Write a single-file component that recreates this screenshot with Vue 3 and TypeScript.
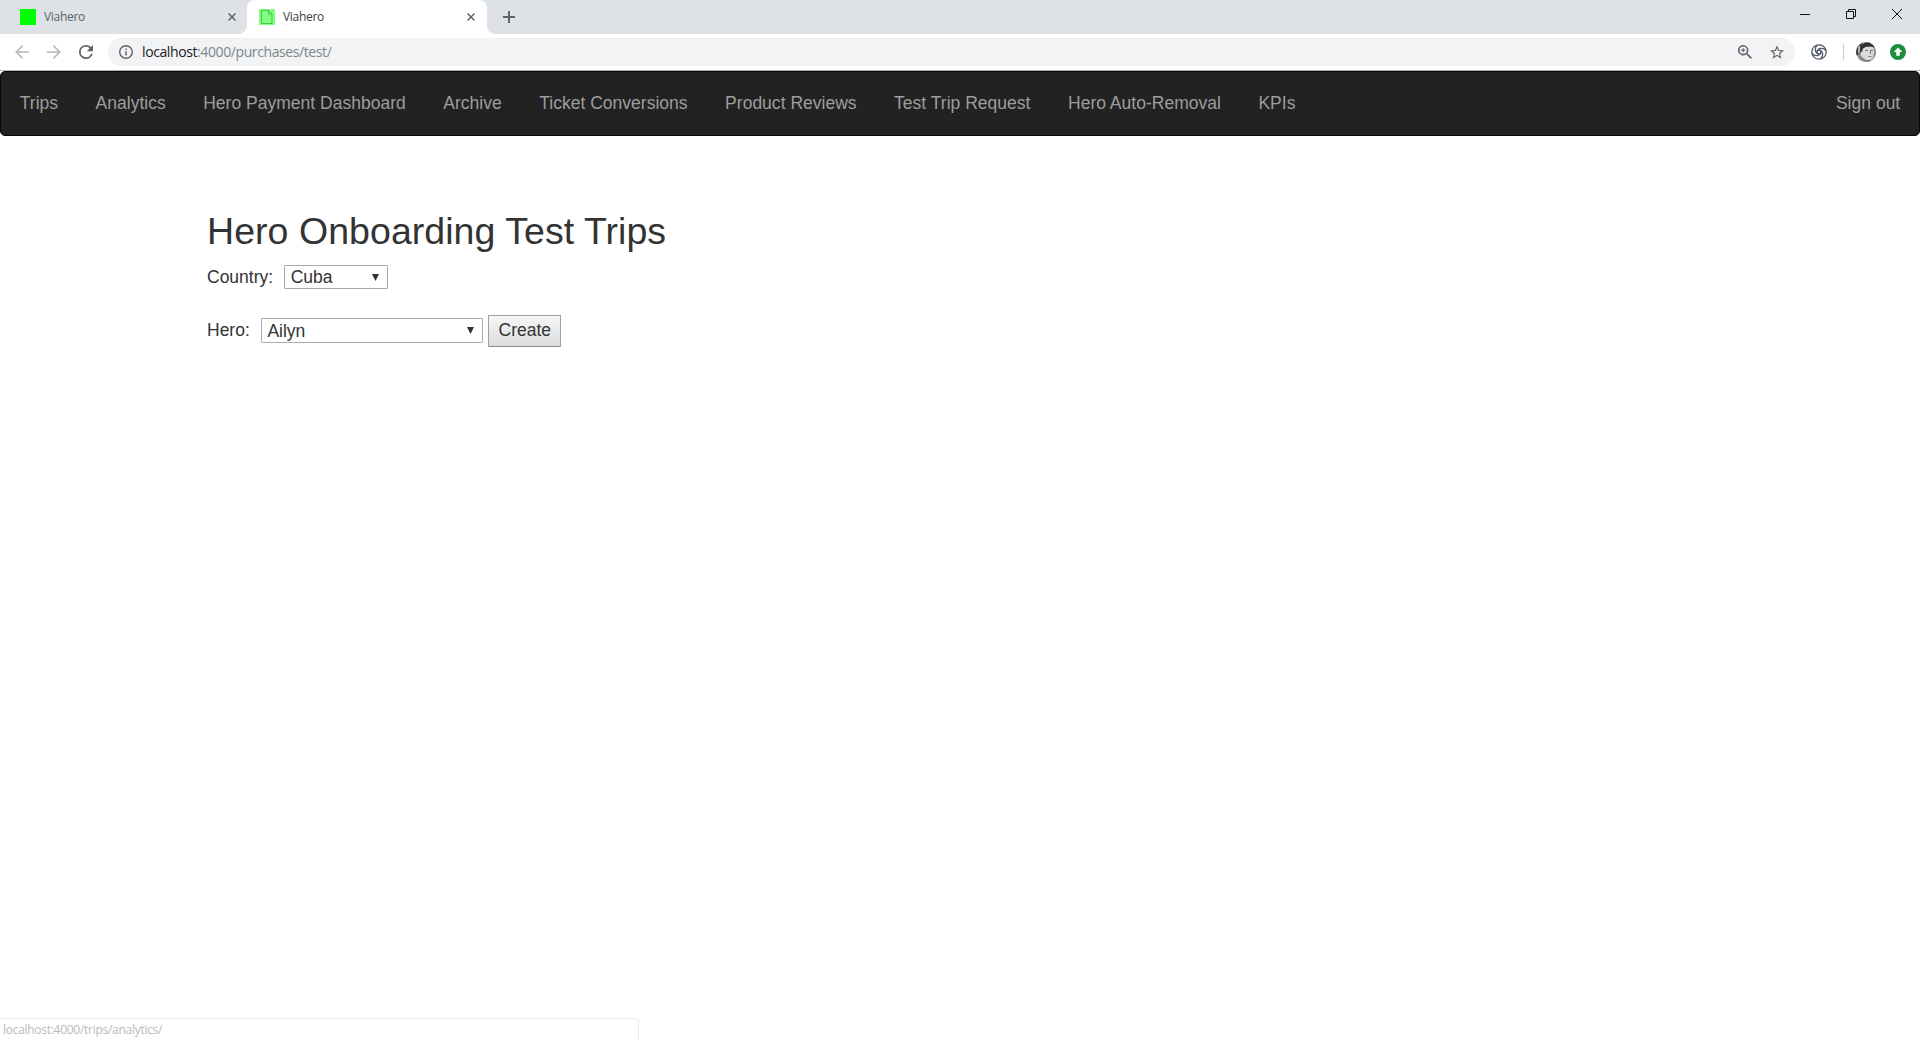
<script setup lang="ts">
import { ref } from 'vue'

interface NavLink {
  label: string
  href: string
}

const links: NavLink[] = [
  { label: 'Trips', href: '#trips' },
  { label: 'Analytics', href: '#analytics' },
  { label: 'Hero Payment Dashboard', href: '#payments' },
  { label: 'Archive', href: '#archive' },
  { label: 'Ticket Conversions', href: '#tickets' },
  { label: 'Product Reviews', href: '#reviews' },
  { label: 'Test Trip Request', href: '#test' },
  { label: 'Hero Auto-Removal', href: '#removal' },
  { label: 'KPIs', href: '#kpis' },
]

const country = ref<string>('Cuba')
const hero = ref<string>('Ailyn')
const blades: number[] = [20, 110, 200, 290]
</script>

<template>
  <div class="window">
    <header class="tabstrip">
      <div class="tab">
        <span class="favicon"></span>
        <span class="tab-title">Viahero</span>
        <svg class="tab-close" viewBox="0 0 8 8"><path d="M.5.5l7 7M7.5.5l-7 7" /></svg>
      </div>
      <div class="tab active">
        <svg class="favicon page" viewBox="0 0 16 16">
          <path d="M2.5 1.5h7l3.5 3.5v9.5H2.5zM9.5 1.5V5H13" fill="none" stroke="#45c545" />
        </svg>
        <span class="tab-title">Viahero</span>
        <svg class="tab-close" viewBox="0 0 8 8"><path d="M.5.5l7 7M7.5.5l-7 7" /></svg>
      </div>
      <svg class="new-tab" viewBox="0 0 12 12"><path d="M6 0v12M0 6h12" /></svg>
      <div class="window-buttons">
        <svg viewBox="0 0 10 10"><path d="M0 5.5h10" /></svg>
        <svg viewBox="0 0 10 10"><path d="M.5 2.5h7v7h-7zM2.5 2.5v-2h7v7h-2" /></svg>
        <svg viewBox="0 0 10 10"><path d="M0 0l10 10M10 0L0 10" /></svg>
      </div>
    </header>

    <div class="toolbar">
      <svg class="back" viewBox="4 4 16 16"><path d="M20 11H7.83l5.59-5.59L12 4l-8 8 8 8 1.41-1.41L7.83 13H20z" /></svg>
      <svg class="forward" viewBox="4 4 16 16"><path d="M12 4l-1.41 1.41L16.17 11H4v2h12.17l-5.58 5.59L12 20l8-8z" /></svg>
      <svg class="reload" viewBox="4 4 16 16">
        <path d="M17.65 6.35A7.96 7.96 0 0 0 12 4a8 8 0 1 0 7.73 10h-2.08A6 6 0 1 1 12 6c1.66 0 3.14.69 4.22 1.78L13 11h7V4z" />
      </svg>
      <div class="omnibox">
        <svg class="info" viewBox="2 2 20 20">
          <path d="M11 17h2v-6h-2zm1-15a10 10 0 1 0 0 20 10 10 0 0 0 0-20zm0 18a8 8 0 1 1 0-16 8 8 0 0 1 0 16zM11 9h2V7h-2z" />
        </svg>
        <span class="url"><b>localhost</b>:4000/purchases/test/</span>
        <svg class="magnifier" viewBox="3 3 17.5 17.5">
          <path d="M15.5 14h-.79l-.28-.27A6.5 6.5 0 1 0 13.73 14.43l.27.28v.79l5 4.99L20.49 19zm-6 0a4.5 4.5 0 1 1 0-9 4.5 4.5 0 0 1 0 9zM10.25 7h-1.5v1.75H7v1.5h1.75V12h1.5v-1.75H12v-1.5h-1.75z" />
        </svg>
        <svg class="star" viewBox="2 2 20 19">
          <path d="M22 9.24l-7.19-.62L12 2 9.19 8.63 2 9.24l5.46 4.73L5.82 21 12 17.27 18.18 21l-1.63-7.03zM12 15.4l-3.76 2.27 1-4.28-3.32-2.88 4.38-.38L12 6.1l1.71 4.04 4.38.38-3.32 2.88 1 4.28z" />
        </svg>
      </div>
      <svg class="swirl" viewBox="-8 -8 16 16">
        <circle r="7.2" />
        <circle r="1.9" />
        <path v-for="angle in blades" :key="angle" :transform="`rotate(${angle})`" d="M-1.9 0C-2.2 -3.6 2.4 -6 6 -3.8" />
      </svg>
      <span class="divider"></span>
      <svg class="avatar" viewBox="0 0 20 20">
        <defs>
          <clipPath id="round"><circle cx="10" cy="10" r="10" /></clipPath>
          <filter id="soft"><feGaussianBlur stdDeviation="0.5" /></filter>
        </defs>
        <g clip-path="url(#round)">
          <path fill="#a8a8a8" d="M0 0h20v20H0z" />
          <g filter="url(#soft)">
            <path fill="#3c3c3c" d="M-1 6l4-6h4L5 12l-6 2z" />
            <path fill="#b5b5b5" d="M2 5l2-2v7l-2 2z" />
            <path fill="#dadada" d="M6 6l4-1.5 7 .5 1 5-1.5 6-3 2.5H9L4 13z" />
            <path fill="#303030" d="M4.5 9L5 4l4-3.5 6-.5 3.5 4-.5 2-2-1.5-6 .2L7 6.5 6 10z" />
            <path fill="#909090" d="M18.5 5h2v10l-3 2z" />
            <path fill="none" stroke="#777" d="M9 8.5h3M14 8.3h3M14.5 9v3M12.5 14.5h3" />
            <path fill="#8a8a8a" d="M3 11l3 4 5 3.5L9 21H2z" />
            <path fill="#4a4a4a" d="M10 18.5l5-.5 3-2-1 4h-6z" />
          </g>
        </g>
      </svg>
      <svg class="update" viewBox="0 0 16 16">
        <circle cx="8" cy="8" r="8" fill="#1e8e3e" />
        <path d="M8 3.6L3.8 8h2.4v3.8h3.6V8h2.4z" fill="#fff" />
      </svg>
    </div>

    <nav class="navbar">
      <a v-for="link in links" :key="link.label" :href="link.href">{{ link.label }}</a>
      <a class="sign-out" href="#signout">Sign out</a>
    </nav>

    <main class="content">
      <h2>Hero Onboarding Test Trips</h2>
      <div class="row country">
        <label for="country">Country:</label>
        <span class="picker">
          <select id="country" v-model="country"><option>Cuba</option></select>
          <svg viewBox="0 0 7 7"><path d="M0 0h7L3.5 7z" /></svg>
        </span>
      </div>
      <div class="row hero">
        <label for="hero">Hero:</label>
        <span class="picker">
          <select id="hero" v-model="hero"><option>Ailyn</option></select>
          <svg viewBox="0 0 7 7"><path d="M0 0h7L3.5 7z" /></svg>
        </span>
        <button type="button">Create</button>
      </div>
    </main>

    <footer class="status">localhost:4000/trips/analytics/</footer>
  </div>
</template>

<style>
body {
  margin: 0;
  background: #fff;
}
</style>

<style scoped>
.window {
  display: flex;
  flex-direction: column;
  box-sizing: border-box;
  height: 1040px;
  overflow: hidden;
  font: 17.5px/25px "Liberation Sans", Arial, sans-serif;
  color: #333;
}
svg {
  display: block;
  flex: none;
}
.tabstrip {
  display: flex;
  flex: none;
  height: 34px;
  background: #dee1e6;
  font: 12px/16px "Open Sans", "Noto Sans", sans-serif;
}
.tab {
  position: relative;
  display: flex;
  align-items: center;
  box-sizing: border-box;
  width: 240px;
  padding: 0 12px;
  color: #5f6368;
}
.tab:first-child {
  margin-left: 8px;
  width: 239px;
}
.tab.active {
  background: #fff;
  border-radius: 8px 8px 0 0;
  color: #3c4043;
}
.tab.active::before,
.tab.active::after {
  content: "";
  position: absolute;
  bottom: 0;
  width: 8px;
  height: 8px;
}
.tab.active::before {
  left: -8px;
  background: radial-gradient(circle at 0 0, transparent 7.5px, #fff 8.2px);
}
.tab.active::after {
  right: -8px;
  background: radial-gradient(circle at 100% 0, transparent 7.5px, #fff 8.2px);
}
.favicon {
  width: 16px;
  height: 16px;
  background: #0f0;
}
.favicon.page {
  background: #80ff80;
}
.tab-title {
  flex: 1;
  margin-left: 8px;
  letter-spacing: -0.3px;
}
.tab-close {
  width: 8px;
  height: 8px;
  stroke: #5f6368;
  stroke-width: 1.5;
}
.tab:first-child .tab-close {
  margin-right: -1px;
}
.new-tab {
  width: 12px;
  height: 12px;
  margin: 11px 0 0 16px;
  stroke: #5f6368;
  stroke-width: 2;
}
.window-buttons {
  display: flex;
  gap: 36px;
  margin: 9px 18px 0 auto;
}
.window-buttons svg {
  width: 10px;
  height: 10px;
  fill: none;
  stroke: #111;
}
.toolbar {
  display: flex;
  flex: none;
  align-items: center;
  box-sizing: border-box;
  height: 37px;
  padding: 0 14px 0 15px;
  border-bottom: 1px solid #b3b8b5;
  fill: #5f6368;
}
.back,
.forward,
.reload {
  width: 14px;
  height: 14px;
  margin-right: 18px;
}
.back,
.forward {
  fill: #bcbec1;
}
.reload {
  margin-right: 15px;
}
.omnibox {
  display: flex;
  flex: 1;
  align-items: center;
  height: 28px;
  padding: 0 11px;
  border-radius: 14px;
  background: #f1f3f4;
}
.info {
  width: 14px;
  height: 14px;
}
.url {
  flex: 1;
  margin-left: 9px;
  font: 14px/20px "Open Sans", "Noto Sans", sans-serif;
  letter-spacing: -0.4px;
  color: #80868b;
}
.url b {
  font-weight: 400;
  color: #202124;
}
.magnifier {
  width: 14px;
  height: 14px;
  margin-right: 18px;
}
.star {
  width: 14px;
  height: 14px;
}
.swirl {
  width: 16px;
  height: 16px;
  margin: 0 16px;
  fill: none;
  stroke: #4d5a69;
  stroke-width: 1.3;
}
.divider {
  width: 1px;
  height: 16px;
  margin-right: 12px;
  background: #c8cacd;
}
.avatar {
  width: 20px;
  height: 20px;
  margin-right: 14px;
}
.update {
  width: 16px;
  height: 16px;
}
.navbar {
  display: flex;
  flex: none;
  box-sizing: border-box;
  height: 65px;
  border: 1px solid #080808;
  border-radius: 5px;
  background: #222;
}
.navbar a {
  padding: 18.75px;
  color: #9d9d9d;
  letter-spacing: 0.012px;
  text-decoration: none;
}
.navbar .sign-out {
  margin-left: auto;
}
.content {
  flex: 1;
  padding: 75px 207px 0;
}
h2 {
  margin: 0;
  font-size: 37.5px;
  font-weight: 500;
  line-height: 41px;
  letter-spacing: 0.05px;
}
.row {
  display: flex;
  align-items: center;
}
.row.country {
  align-items: flex-start;
  margin-top: 13px;
}
.row.hero {
  margin-top: 25px;
}
.picker {
  position: relative;
  height: 24px;
}
.picker svg {
  position: absolute;
  top: 9px;
  right: 9px;
  width: 7px;
  height: 7px;
  fill: #333;
  pointer-events: none;
}
select {
  display: block;
  box-sizing: border-box;
  width: 100%;
  height: 100%;
  margin: 0;
  padding: 0 5.6px;
  border: 1px solid #a9a9a9;
  border-radius: 1px;
  background: #fff;
  color: inherit;
  font: inherit;
  line-height: 20px;
  appearance: none;
}
.country .picker {
  width: 104px;
  margin-left: 11px;
}
.hero label {
  margin-bottom: 1px;
}
.hero .picker {
  width: 222px;
  height: 25px;
  margin: 0 0 1px 11px;
}
button {
  box-sizing: border-box;
  width: 73px;
  height: 32px;
  margin: 0 0 0 5px;
  padding: 0 0 1px 1px;
  border: 1px solid #a0a0a0;
  border-bottom-color: #888;
  border-radius: 1px;
  background: linear-gradient(#f6f6f6, #dddddd);
  color: inherit;
  font: inherit;
}
.status {
  box-sizing: border-box;
  width: 639px;
  height: 22px;
  padding: 1px 3px;
  border: 1px solid #ececec;
  border-width: 1px 1px 0 0;
  border-radius: 0 4px 0 0;
  font: 12px/19px "Open Sans", "Noto Sans", sans-serif;
  letter-spacing: -0.28px;
  color: #b9b9b9;
}
</style>
